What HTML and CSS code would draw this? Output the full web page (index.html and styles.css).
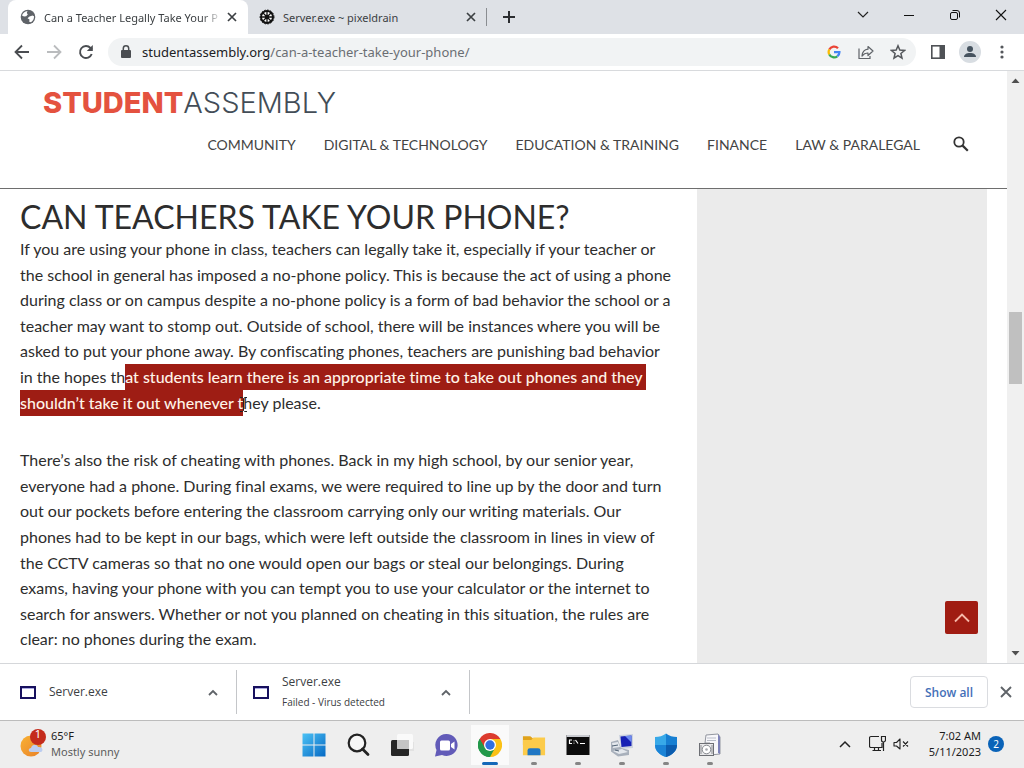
FILE: index.html
```html
<!DOCTYPE html>
<html lang="en">
<head>
<meta charset="utf-8">
<title>Can a Teacher Legally Take Your Phone?</title>
<link rel="stylesheet" href="styles.css">
</head>
<body>
<div class="screen">

  <header class="tabstrip">
    <div class="tab tab-active">
      <svg class="favicon" viewBox="0 0 16 16"><circle cx="8" cy="8" r="7.3" fill="#5f6368"/><path d="M2 6.500C2.800 4 4.800 2.300 7.500 2L6.800 4l1 1.500-1.600 1.700L4 7.500zM9.500 7.500l3-1 1.500.8c.2 2.500-1 4.700-3 5.900l-1.800-.4.300-2.300-2-1.200z" fill="#fff"/></svg>
      <span class="tab-title tab-fade">Can a Teacher Legally Take Your P</span>
      <button class="tab-close" aria-label="Close tab"><svg width="10" height="10" viewBox="0 0 10 10"><path d="m1 1 8 8M9 1 1 9" stroke="#3c4043" stroke-width="1.700"/></svg></button>
    </div>
    <div class="tab">
      <svg class="favicon" viewBox="0 0 16 16"><circle cx="8" cy="8" r="6" fill="#fff" stroke="#111" stroke-width="2"/><g stroke="#111" stroke-width="1.300"><path d="M8 2v12M2 8h12M3.800 3.800l8.400 8.400M12.200 3.800l-8.400 8.400"/></g><circle cx="8" cy="8" r="2.200" fill="#111"/><circle cx="8" cy="8" r="7" fill="none" stroke="#111" stroke-dasharray="1.500 1.500"/></svg>
      <span class="tab-title">Server.exe ~ pixeldrain</span>
      <button class="tab-close" aria-label="Close tab"><svg width="10" height="10" viewBox="0 0 10 10"><path d="m1 1 8 8M9 1 1 9" stroke="#3c4043" stroke-width="1.700"/></svg></button>
    </div>
    <button class="new-tab" aria-label="New tab"><svg width="12" height="12" viewBox="0 0 12 12"><path d="M6 0v12M0 6h12" stroke="#2b2d30" stroke-width="2"/></svg></button>
    <div class="window-controls">
      <button aria-label="Search tabs"><svg width="12" height="12" viewBox="0 0 12 12"><path d="m1 3 5 5 5-5" fill="none" stroke="#222" stroke-width="1.200"/></svg></button>
      <button aria-label="Minimize"><svg width="12" height="12" viewBox="0 0 12 12"><path d="M1 6.500h10" stroke="#111"/></svg></button>
      <button aria-label="Restore"><svg width="12" height="12" viewBox="0 0 12 12"><rect x="1.500" y="3.500" width="7" height="7" rx="1.500" fill="none" stroke="#111"/><path d="M3.500 1.500H8A2.500 2.500 0 0 1 10.500 4v4.500" fill="none" stroke="#111"/></svg></button>
      <button aria-label="Close"><svg width="12" height="12" viewBox="0 0 12 12"><path d="m1 1 10 10M11 1 1 11" stroke="#111" stroke-width="1.100"/></svg></button>
    </div>
  </header>

  <div class="toolbar">
    <button class="tool" aria-label="Back"><svg width="16" height="16" viewBox="0 0 16 16"><path d="M15 8H2M8 1.500 1.500 8 8 14.500" fill="none" stroke="#4a4d51" stroke-width="1.800"/></svg></button>
    <button class="tool" aria-label="Forward"><svg width="16" height="16" viewBox="0 0 16 16"><path d="M1 8h13M8 1.500 14.500 8 8 14.500" fill="none" stroke="#babcbe" stroke-width="1.800"/></svg></button>
    <button class="tool" aria-label="Reload"><svg width="16" height="16" viewBox="0 0 16 16"><path d="M13.700 10A6 6 0 1 1 12.500 4L14 5.500" fill="none" stroke="#4a4d51" stroke-width="1.900"/><path d="M14.800 1v6H8.800z" fill="#4a4d51"/></svg></button>
    <div class="omnibox">
      <svg class="lock" width="10" height="14" viewBox="0 0 10 14"><rect y="5" width="10" height="8" rx="1" fill="#4a4d51"/><path d="M2.300 6V3.500a2.700 2.700 0 0 1 5.400 0V6" fill="none" stroke="#4a4d51" stroke-width="1.500"/></svg>
      <div class="url" role="textbox" aria-label="Address">studentassembly.org<span class="url-path">/can-a-teacher-take-your-phone/</span></div>
      <button class="tool" aria-label="Search with Google"><svg width="14" height="14" viewBox="0 0 14 14"><g fill="none" stroke-width="2.300"><path d="M11 3.200A5.400 5.400 0 0 0 2.300 4.500" stroke="#ea4335"/><path d="M2.300 4.500a5.400 5.400 0 0 0 0 5" stroke="#fbbc05"/><path d="M2.300 9.500a5.400 5.400 0 0 0 8 1.800" stroke="#34a853"/><path d="M10.300 11.300A5 5 0 0 0 12.400 7.200H7" stroke="#4285f4"/></g></svg></button>
      <button class="tool" aria-label="Share"><svg width="16" height="16" viewBox="0 0 16 16"><path d="M1 4.500v10h11V12" fill="none" stroke="#5f6368" stroke-width="1.200"/><path d="M10 2.500 15 7l-5 4.500V9C7.500 8.800 5.800 9.800 4 12c.3-3.600 2.300-6.400 6-6.800z" fill="none" stroke="#5f6368" stroke-width="1.200" stroke-linejoin="round"/></svg></button>
      <button class="tool" aria-label="Bookmark"><svg width="16" height="16" viewBox="0 0 16 16"><path d="m8 1.800 1.800 4.300 4.700.4-3.600 3 1.100 4.600-4-2.500-4 2.500 1.100-4.600-3.600-3 4.700-.4z" fill="none" stroke="#54575b" stroke-width="1.500"/></svg></button>
    </div>
    <button class="tool" aria-label="Side panel"><svg width="14" height="14" viewBox="0 0 14 14"><rect x=".8" y=".8" width="12.400" height="12.400" fill="#fff" stroke="#4f5256" stroke-width="1.600"/><path d="M8.500 1H13v12H8.500z" fill="#4f5256"/></svg></button>
    <button class="tool" aria-label="Profile"><svg width="22" height="22" viewBox="0 0 22 22"><circle cx="11" cy="11" r="11" fill="#d8dde2"/><circle cx="11" cy="8" r="3" fill="#46535f"/><path d="M5 16c0-2.500 2.500-4 6-4s6 1.500 6 4z" fill="#46535f"/></svg></button>
    <button class="tool" aria-label="Menu"><svg width="4" height="14" viewBox="0 0 4 14"><g fill="#54575b"><circle cx="2" cy="2" r="1.600"/><circle cx="2" cy="7" r="1.600"/><circle cx="2" cy="12" r="1.600"/></g></svg></button>
  </div>

  <div class="viewport">
    <div class="page">
      <header class="site-header">
        <a class="logo" href="#"><b>STUDENT</b>ASSEMBLY</a>
        <nav class="site-nav">
          <a href="#">COMMUNITY</a>
          <a href="#">DIGITAL &amp; TECHNOLOGY</a>
          <a href="#">EDUCATION &amp; TRAINING</a>
          <a href="#">FINANCE</a>
          <a href="#">LAW &amp; PARALEGAL</a>
          <button class="search" aria-label="Search"><svg width="16" height="16" viewBox="0 0 16 16"><circle cx="6" cy="6" r="4.700" fill="none" stroke="#333" stroke-width="1.800"/><path d="m9.600 9.600 5.200 5.200" stroke="#333" stroke-width="2.200"/></svg></button>
        </nav>
      </header>
      <div class="columns">
        <article class="article">
          <h2>CAN TEACHERS TAKE YOUR PHONE?</h2>
          <p>If you are using your phone in class, teachers can legally take it, especially if your teacher or the school in general has imposed a no-phone policy. This is because the act of using a phone during class or on campus despite a no-phone policy is a form of bad behavior the school or a teacher may want to stomp out. Outside of school, there will be instances where you will be asked to put your phone away. By confiscating phones, teachers are punishing bad behavior in the hopes th<mark>at students learn there is an appropriate time to take out phones and they&nbsp;<wbr>shouldn’t take it out whenever t</mark><span class="caret"><svg width="7" height="15" viewBox="0 0 7 15"><path d="M0 .5h2.500l1 1 1-1H7M3.500 1.500v12M0 14.500h2.500l1-1 1 1H7" fill="none" stroke="#222"/></svg></span>hey please.</p>
          <p>There’s also the risk of cheating with phones. Back in my high school, by our senior year, everyone had a phone. During final exams, we were required to line up by the door and turn out our pockets before entering the classroom carrying only our writing materials. Our phones had to be kept in our bags, which were left outside the classroom in lines in view of the CCTV cameras so that no one would open our bags or steal our belongings. During exams, having your phone with you can tempt you to use your calculator or the internet to search for answers. Whether or not you planned on cheating in this situation, the rules are clear: no phones during the exam.</p>
        </article>
        <aside class="sidebar"></aside>
      </div>
      <button class="to-top" aria-label="Back to top"><svg width="16" height="10" viewBox="0 0 16 10"><path d="m1 8.500 7-7 7 7" fill="none" stroke="#f6b9a9" stroke-width="1.800"/></svg></button>
    </div>
    <div class="scrollbar">
      <svg width="9" height="5" viewBox="0 0 9 5"><path d="M.5 5 4.500.500 8.500 5z" fill="#505050"/></svg>
      <div class="track"><div class="thumb"></div></div>
      <svg width="9" height="5" viewBox="0 0 9 5"><path d="M.5 0 4.500 4.500 8.500 0z" fill="#505050"/></svg>
    </div>
  </div>

  <div class="downloads">
    <div class="download">
      <svg class="file" viewBox="0 0 16 13"><rect x="1" y="1" width="14" height="11" fill="#fff" stroke="#17105e" stroke-width="2"/><path d="M2 2.500h12" stroke="#a9a7e0"/></svg>
      <div class="download-text">Server.exe</div>
      <button class="more" aria-label="Download options"><svg width="10" height="7" viewBox="0 0 10 7"><path d="m1 6 4-4 4 4" fill="none" stroke="#5f6368" stroke-width="1.800"/></svg></button>
    </div>
    <div class="download">
      <svg class="file" viewBox="0 0 16 13"><rect x="1" y="1" width="14" height="11" fill="#fff" stroke="#17105e" stroke-width="2"/><path d="M2 2.500h12" stroke="#a9a7e0"/></svg>
      <div class="download-text">Server.exe<small>Failed - Virus detected</small></div>
      <button class="more" aria-label="Download options"><svg width="10" height="7" viewBox="0 0 10 7"><path d="m1 6 4-4 4 4" fill="none" stroke="#5f6368" stroke-width="1.800"/></svg></button>
    </div>
    <button class="show-all">Show all</button>
    <button class="shelf-close" aria-label="Close downloads"><svg width="12" height="12" viewBox="0 0 12 12"><path d="m1 1 10 10M11 1 1 11" stroke="#5f6368" stroke-width="1.900"/></svg></button>
  </div>

  <footer class="taskbar">
    <div class="weather">
      <svg width="28" height="30" viewBox="0 0 28 30"><defs><linearGradient id="sun" x1="0" y1="0" x2="1" y2="1"><stop offset="0" stop-color="#f9b233"/><stop offset="1" stop-color="#e8812a"/></linearGradient></defs><circle cx="12" cy="17" r="10.500" fill="url(#sun)"/><path d="M12 23c-3 0-3-4 0-4 1-4 6-4 7-1 5-1 6 5 2 5z" fill="#bccdf0"/><circle cx="19" cy="8" r="8" fill="#c42b1c"/></svg>
      <span class="alert">1</span>
      <div class="weather-text"><span class="temp">65°F</span><span class="sky">Mostly sunny</span></div>
    </div>
    <div class="apps">
      <button class="app" aria-label="Start"><svg viewBox="0 0 24 24"><defs><linearGradient id="win" x1="0" y1="0" x2="1" y2="1"><stop offset="0" stop-color="#4cc2f5"/><stop offset="1" stop-color="#0669c4"/></linearGradient></defs><path d="M.5.500h11v11H.500zM12.500.500h11v11h-11zM.500 12.500h11v11H.500zM12.500 12.500h11v11h-11z" fill="url(#win)"/></svg></button>
      <button class="app" aria-label="Search"><svg viewBox="0 0 24 24"><circle cx="11" cy="10" r="8.300" fill="#f7f7f7" stroke="#222" stroke-width="2.200"/><path d="m16.500 16 5.500 5.500" stroke="#222" stroke-width="2.800" stroke-linecap="round"/></svg></button>
      <button class="app" aria-label="Task view"><svg viewBox="0 0 24 24"><path d="M20 9h4v9h-6z" fill="#e2e2e2"/><rect x="1" y="7" width="18" height="16" rx="1.500" fill="#262626"/><rect x="7" y="1" width="16" height="15" rx="1.500" fill="#fafafa"/><path d="M7 7h12v9H8.500A1.500 1.500 0 0 1 7 14.500z" fill="#c4c4c4"/></svg></button>
      <button class="app" aria-label="Chat"><svg viewBox="0 0 24 24"><path d="M12.500 1a11 11 0 1 1-4.500 21L1 23.500 2.500 17A11 11 0 0 1 12.500 1z" fill="#625bb8"/><rect x="6" y="7.500" width="10" height="10" rx="1.500" fill="#fff"/><path d="m17 11 3.500-2.500v8L17 14z" fill="#fff"/></svg></button>
      <button class="app app-current" aria-label="Chrome"><svg viewBox="0 0 24 24"><path d="M12 12 1.600 6A12 12 0 0 1 22.400 6z" fill="#dc3b2e"/><path d="M12 12 22.400 6A12 12 0 0 1 12 24z" fill="#fbc116"/><path d="M12 12v12A12 12 0 0 1 1.600 6z" fill="#23994b"/><path d="M12 6h10.400L17 15z" fill="#fbc116"/><path d="m7 15 5 3 5-3-5 9z" fill="#23994b"/><path d="M1.600 6 7 15 12 6z" fill="#dc3b2e"/><path d="m1.600 6 5.200 9L12 18l-1 6A12 12 0 0 1 1.600 6z" fill="#23994b"/><circle cx="12" cy="12" r="6" fill="#fff"/><circle cx="12" cy="12" r="4.700" fill="#2f6fe0"/></svg></button>
      <button class="app app-running" aria-label="File Explorer"><svg viewBox="0 0 26 24"><path d="M1 2.500h8l3 2.500h12.500V12H1z" fill="#e0a21b"/><path d="M1 6.500h9L12.500 4H25v19H1z" fill="#fccb4a"/><path d="M6 23v-5a2.500 2.500 0 0 1 2.500-2.500h9A2.500 2.500 0 0 1 20 18v5z" fill="#1f77c4"/></svg></button>
      <button class="app app-running" aria-label="Command Prompt"><svg viewBox="0 0 24 24"><path d="M.5 2h23v20H.500z" fill="#0c0c0c"/><path d="M.5 2h23v2H.500z" fill="#c9cbd0"/><path d="M6 7H3.500v3.500H6M8 7.500v.8M8 9.700v.8M9.500 7l2.500 3.500M14 10.500h5" stroke="#fff" stroke-width="1.200" fill="none"/></svg></button>
      <button class="app app-running" aria-label="Remote computer"><svg viewBox="0 0 24 24"><path d="m9 2 14-1v14l-12 1z" fill="#ccd3de"/><path d="m10.500 3.500 11-1v10.500l-10 1z" fill="#1620b4"/><path d="m15 3 6.500-.5v7z" fill="#6d8bf1"/><path d="m1 9 7-2 3 8 8 2v5L8 23.500l-7-5z" fill="#a8b0bb"/><path d="m2 10 6-1 2 5-7 1zM3 18l6 3 9-2-6-3z" fill="#e4e8ed"/><path d="m2 13 6-1M5 17l4 1" stroke="#4f6173"/></svg></button>
      <button class="app app-running" aria-label="Windows Security"><svg viewBox="0 0 24 24"><path d="M12 .5C9 3 5 4 1 4v8c0 6 5 10 11 12z" fill="#38a9e8"/><path d="M12 .5C15 3 19 4 23 4v8c0 6-5 10-11 12z" fill="#177fd2"/><path d="M1 12h11v12C6 22 1 18 1 12z" fill="#1a83d6"/><path d="M12 12h11c0 6-5 10-11 12z" fill="#0b5cae"/></svg></button>
      <button class="app app-running" aria-label="Installer"><svg viewBox="0 0 24 24"><path d="m8 2 12-1 2 3v17l-10 1V10H7z" fill="#f7f7fa" stroke="#92969f"/><path d="M20 1v19l2 1V4z" fill="#7d82b8"/><path d="M9 5h9M9 7.500h9" stroke="#b9bdc8"/><rect x="1.500" y="10.500" width="14" height="12" fill="#e8e8ea" stroke="#6d6f74"/><circle cx="8.500" cy="16.500" r="4.300" fill="#fff" stroke="#85888e"/><circle cx="8.500" cy="16.500" r="1.300" fill="#a5a8ae"/><path d="M3 12v9M14 12v9" stroke="#8d8f94"/></svg></button>
    </div>
    <div class="tray">
      <svg width="12" height="8" viewBox="0 0 12 8"><path d="m1 7 5-5 5 5" fill="none" stroke="#222" stroke-width="1.500"/></svg>
      <svg class="net" width="17" height="17" viewBox="0 0 17 17"><path d="M10 1.500H2A1.500 1.500 0 0 0 .5 3v8A1.500 1.500 0 0 0 2 12.500h11V8M3.500 15.500H12M5.500 12.500v3M9.500 12.500v3M12.500 1.500h4V5a2 2 0 0 1-4 0zM14.500 7v9" fill="none" stroke="#222" stroke-width="1.200"/></svg>
      <svg width="16" height="12" viewBox="0 0 16 12"><path d="M1 4.500h2.500L7 1v10L3.500 8H1zM10 3.500l5 5M15 3.500l-5 5" fill="none" stroke="#222" stroke-width="1.100" stroke-linejoin="round"/></svg>
      <div class="clock"><span>7:02 AM</span><span>5/11/2023</span></div>
      <span class="count">2</span>
    </div>
  </footer>
</div>
</body>
</html>
```
FILE: styles.css
```css
* { box-sizing: border-box; }

body {
  margin: 0;
  font-family: "Open Sans", "Noto Sans", sans-serif;
  font-size: 12px;
  color: #3c4043;
}

button {
  display: flex;
  align-items: center;
  justify-content: center;
  padding: 0;
  border: 0;
  background: none;
  font: inherit;
  color: inherit;
}

svg { display: block; flex: none; }
a { color: inherit; text-decoration: none; }

.screen {
  display: flex;
  flex-direction: column;
  height: 100vh;
  overflow: hidden;
  background: #fff;
}

/* Tab strip */
.tabstrip {
  display: flex;
  flex: none;
  height: 34px;
  padding-left: 8px;
  background: #dee1e6;
  font-family: "Noto Sans", sans-serif;
  font-size: 11px;
}

.tab {
  display: flex;
  align-items: center;
  width: 238px;
  padding: 0 10px 0 11px;
}

.tab-active {
  width: 240px;
  padding: 0 11px 0 12px;
  background: #fff;
  border-radius: 8px 8px 0 0;
}

.favicon { width: 16px; height: 16px; }

.tab-title {
  flex: 1;
  min-width: 0;
  margin: 0 4px 0 8px;
  overflow: hidden;
  white-space: nowrap;
}

.tab-fade {
  -webkit-mask-image: linear-gradient(to right, #000 88%, transparent);
  mask-image: linear-gradient(to right, #000 88%, transparent);
}

.tab-close { width: 10px; height: 16px; }

.new-tab {
  width: 44px;
  margin: 8px 0;
  border-left: 1px solid #8a8d91;
}

.window-controls { display: flex; margin: 0 0 5px auto; }
.window-controls button { width: 46px; }

/* Toolbar */
.toolbar {
  display: flex;
  flex: none;
  align-items: center;
  height: 37px;
  padding: 0 6px;
  border-bottom: 1px solid #d8dadd;
}

.tool { width: 32px; height: 28px; flex: none; }

.omnibox {
  display: flex;
  flex: 1;
  align-items: center;
  height: 28px;
  margin: 0 6px;
  padding: 0 2px 0 13px;
  border-radius: 14px;
  background: #f1f3f4;
}

.url {
  flex: 1;
  margin-left: 11px;
  font-family: "Noto Sans", sans-serif;
  font-size: 13px;
  white-space: nowrap;
  color: #202124;
}

.url-path { color: #6a6e73; }

/* Page */
.viewport { display: flex; flex: 1; min-height: 0; }

.page {
  position: relative;
  display: flex;
  flex: 1;
  flex-direction: column;
  min-width: 0;
  overflow: hidden;
  font-family: Lato, sans-serif;
  font-variant-ligatures: no-common-ligatures;
  color: #2d2d2d;
}

.site-header {
  flex: none;
  height: 118px;
  padding: 14px 37px 0 43px;
  border-bottom: 1px solid #6e6e6e;
}

.logo {
  display: block;
  font: 300 29px/35px Inter, sans-serif;
  color: #434d57;
}

.logo b { font-weight: 800; color: #e4523f; }

.site-nav {
  display: flex;
  align-items: center;
  justify-content: flex-end;
  gap: 28px;
  height: 48px;
  font-size: 14px;
  white-space: nowrap;
  color: #444;
}

.search { width: 18px; margin-left: 4px; }

.columns { display: flex; flex: 1; min-height: 0; padding-right: 20px; }

.article { flex: 1; padding: 8px 25px 0 20px; }

.article h2 {
  margin: 0;
  font-size: 32px;
  font-weight: 400;
  line-height: 39px;
}

.article p {
  margin: 0 0 32px;
  font-size: 16px;
  line-height: 1.6;
}

mark {
  padding: 3px 0 4px;
  background: #9e1d14;
  color: #fff3e8;
  font-weight: 500;
}

.caret { position: relative; }
.caret svg { position: absolute; left: -3px; top: 4px; }

.sidebar { width: 290px; background: #ebebeb; }

.to-top {
  position: absolute;
  right: 29px;
  bottom: 29px;
  width: 33px;
  height: 33px;
  border-radius: 2px;
  background: #a01c12;
}

.scrollbar {
  display: flex;
  flex-direction: column;
  align-items: center;
  width: 17px;
  padding: 7px 0;
  background: #f0f0f0;
}

.track {
  display: grid;
  flex: 1;
  grid-template-rows: 229fr 72fr 267fr;
  width: 13px;
}

.thumb { grid-row: 2; background: #c0c0c0; }

/* Downloads shelf */
.downloads {
  display: flex;
  flex: none;
  align-items: center;
  height: 57px;
  border-top: 1px solid #d5d7da;
}

.download {
  display: flex;
  align-items: center;
  width: 237px;
  height: 44px;
  padding: 0 18px 0 20px;
  border-right: 1px solid #c4c6c9;
}

.download + .download { width: 233px; padding-left: 16px; }

.file { width: 16px; height: 13px; }

.download-text { flex: 1; margin-left: 13px; line-height: 20px; }
.download-text small { display: block; font-size: 10px; }

.show-all {
  width: 78px;
  height: 32px;
  margin-left: auto;
  border: 1px solid #dadce0;
  border-radius: 4px;
  font-weight: 600;
  color: #4470b8;
}

.shelf-close { width: 36px; height: 32px; }

/* Taskbar */
.taskbar {
  display: grid;
  flex: none;
  grid-template-columns: 1fr auto 1fr;
  height: 48px;
  border-top: 1px solid #bcbcbc;
  background: #eeeeee;
  font-family: "Noto Sans", sans-serif;
  font-size: 11px;
  line-height: 16px;
  color: #1c1c1c;
}

.weather {
  position: relative;
  display: flex;
  align-items: center;
  padding: 0 0 2px 19px;
}

.alert {
  position: absolute;
  left: 30px;
  top: 5px;
  width: 16px;
  color: #fff;
  text-align: center;
}

.weather-text { display: flex; flex-direction: column; margin-left: 4px; }
.sky { color: #5c5c5c; }

.apps { display: flex; align-items: center; }

.app {
  position: relative;
  width: 44px;
  height: 40px;
}

.app svg { width: 24px; height: 24px; }

.app-current { background: linear-gradient(#fafafa, #fafafa) center / 38px 40px no-repeat; }

.app-current::after,
.app-running::after {
  content: "";
  position: absolute;
  bottom: 0;
  width: 6px;
  height: 3px;
  border-radius: 2px;
  background: #858585;
}

.app-current::after { width: 16px; background: #1368b8; }

.tray {
  display: flex;
  align-items: center;
  justify-content: flex-end;
  padding: 0 20px 2px 0;
}

.net { margin: 0 7px 0 18px; }

.clock {
  display: flex;
  flex-direction: column;
  margin-left: 20px;
  text-align: right;
}

.count {
  width: 16px;
  height: 16px;
  margin-left: 7px;
  border-radius: 50%;
  background: #0a63b8;
  color: #fff;
  font-size: 10px;
  text-align: center;
}
```
